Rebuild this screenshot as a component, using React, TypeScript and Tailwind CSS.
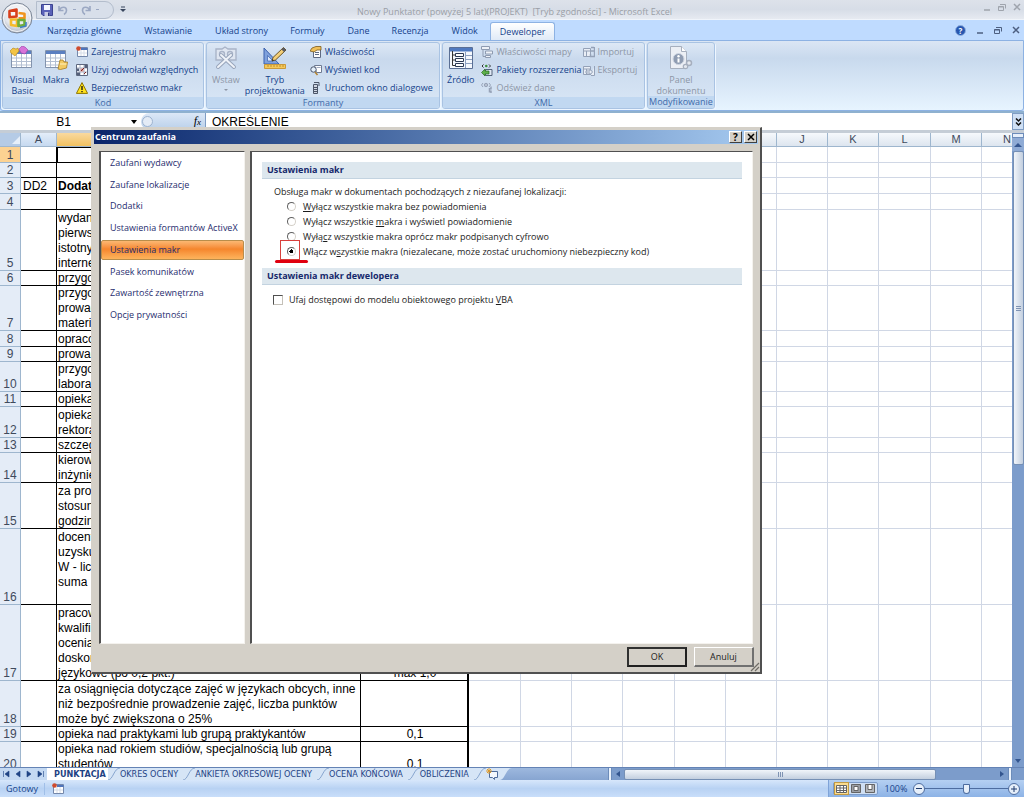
import { useState, type ReactNode } from "react";
import clsx from "clsx";

/* ---------- data ---------- */

const tabs = [
  "Narzędzia główne",
  "Wstawianie",
  "Układ strony",
  "Formuły",
  "Dane",
  "Recenzja",
  "Widok",
  "Deweloper",
];

const columns = [
  { name: "A", width: 36 },
  { name: "B", width: 304 },
  { name: "C", width: 108 },
  { name: "D", width: 52 },
  { name: "E", width: 51 },
  { name: "F", width: 51 },
  { name: "G", width: 52 },
  { name: "H", width: 51 },
  { name: "I", width: 51 },
  { name: "J", width: 51 },
  { name: "K", width: 51 },
  { name: "L", width: 52 },
  { name: "M", width: 51 },
  { name: "N", width: 51 },
];

interface Row {
  height: number;
  a?: string;
  b?: string[];
  c?: string;
}

const rows: Row[] = [
  { height: 16 },
  { height: 15 },
  { height: 16, a: "DD2", b: ["Dodatki"] },
  { height: 16 },
  { height: 61, b: ["wydanie", "pierwsze", "istotny", "internet"] },
  { height: 15, b: ["przygot"] },
  { height: 45, b: ["przygot", "prowadz", "materiał"] },
  { height: 16, b: ["opracow"] },
  { height: 15, b: ["prowadz"] },
  { height: 30, b: ["przygot", "laborat"] },
  { height: 15, b: ["opieka"] },
  { height: 31, b: ["opieka", "rektora"] },
  { height: 15, b: ["szczeg"] },
  { height: 30, b: ["kierow", "inżynie"] },
  { height: 46, b: ["za proc", "stosun", "godzin"] },
  { height: 76, b: ["docent", "uzysku", "W - licz", "suma", " "] },
  {
    height: 76,
    b: ["pracow", "kwalifik", "ocenia", "doskon", "językowe (po 0,2 pkt.)"],
    c: "max 1,0",
  },
  {
    height: 46,
    b: [
      "za osiągnięcia dotyczące zajęć w językach obcych, inne",
      "niż bezpośrednie prowadzenie zajęć, liczba punktów",
      "może być zwiększona o 25%",
    ],
  },
  { height: 15, b: ["opieka nad praktykami lub grupą praktykantów"], c: "0,1" },
  {
    height: 30,
    b: ["opieka nad rokiem studiów, specjalnością lub grupą", "studentów"],
    c: "0,1",
  },
];

const sheets = [
  "PUNKTACJA",
  "OKRES OCENY",
  "ANKIETA OKRESOWEJ OCENY",
  "OCENA KOŃCOWA",
  "OBLICZENIA",
];

const categories = [
  "Zaufani wydawcy",
  "Zaufane lokalizacje",
  "Dodatki",
  "Ustawienia formantów ActiveX",
  "Ustawienia makr",
  "Pasek komunikatów",
  "Zawartość zewnętrzna",
  "Opcje prywatności",
];

// [before, access key, after]
const macroOptions = [
  ["", "W", "yłącz wszystkie makra bez powiadomienia"],
  ["Wyłącz wszystkie ", "m", "akra i wyświetl powiadomienie"],
  ["Wyłą", "c", "z wszystkie makra oprócz makr podpisanych cyfrowo"],
  [
    "Włącz w",
    "s",
    "zystkie makra (niezalecane, może zostać uruchomiony niebezpieczny kod)",
  ],
];

/* ---------- icons ---------- */

function OfficeLogo() {
  return (
    <svg className="size-8" viewBox="0 0 32 32">
      <defs>
        <radialGradient id="orb" cx="0.5" cy="0.35" r="0.65">
          <stop offset="0" stopColor="#ffffff" />
          <stop offset="0.65" stopColor="#e3e6ec" />
          <stop offset="1" stopColor="#a9b1c0" />
        </radialGradient>
      </defs>
      <circle cx="16" cy="16" r="15" fill="url(#orb)" stroke="#7c8797" />
      <circle cx="16" cy="16" r="13.5" fill="none" stroke="#fff" strokeOpacity="0.8" />
      <g fill="none" strokeWidth="2.6" strokeLinejoin="round">
        <path d="M8.500 9l7-1.500v7l-7 .8z" stroke="#d8401c" />
        <path d="M17.500 11l6 .8v4.500h-6" stroke="#f0941d" />
        <path d="M10 17.500v5.500l6 1v-6.500z" stroke="#f6bb2a" />
        <path d="M17.500 18h6v5l-6 1z" stroke="#6fae3a" />
        <path d="M19 25.500l6-1.500v-4" stroke="#3e7fc1" strokeWidth="1.500" />
      </g>
    </svg>
  );
}

function SaveIcon() {
  return (
    <svg className="size-3" viewBox="0 0 12 12">
      <path d="M.5.5h11v11H2L.5 10z" fill="#5a62b8" stroke="#3b4390" />
      <path d="M3 1h6v5H3z" fill="#f4f6ff" />
      <path d="M3.500 8h5v4h-5z" fill="#c9cde6" />
      <path d="M7 8.500h1.500V12H7z" fill="#2f3780" />
    </svg>
  );
}

function UndoIcon({ flip = false }: { flip?: boolean }) {
  return (
    <svg className={clsx("h-3 w-2.5", flip && "-scale-x-100")} viewBox="0 0 10 12">
      <path d="M1 2v4.500h4.500M1.500 6C3 2.500 8.500 2 8.500 6.500c0 2-1 3-2.500 4" fill="none" stroke="#9ba8c3" strokeWidth="1.600" />
    </svg>
  );
}

function GridSheet({ children, ink = "#5b7fc0" }: { children?: ReactNode; ink?: string }) {
  return (
    <svg className="size-6" viewBox="0 0 24 24">
      <path d="M1.500 4.500h20v17h-20z" fill="#fff" stroke="#8393ad" />
      <path d="M2 5h19v3H2z" fill={ink} />
      <path d="M2 12h19M2 15.500h19M2 19h19M6.500 8v13M11.500 8v13M16.500 8v13" stroke="#b3bfd2" />
      {children}
    </svg>
  );
}

function VisualBasicIcon() {
  return (
    <GridSheet>
      <path d="M0 5l3-3 3 1 2-1 1 3-4 5-4-3z" fill="#f3c445" stroke="#b58518" strokeWidth="0.600" />
      <path d="M9 3l3-3 3 1 3 3-3 4-4-1z" fill="#d873d9" stroke="#9b3aa3" strokeWidth="0.600" />
    </GridSheet>
  );
}

function MacrosIcon() {
  return (
    <GridSheet>
      <path d="M14 23l2-9h3l1 2h3.500l-1 6-6 1.500z" fill="#f2ca62" stroke="#a87c1e" strokeWidth="0.800" />
      <path d="M16 18h6.500" stroke="#fff2c0" />
    </GridSheet>
  );
}

function ToolsIcon() {
  return (
    <svg className="size-6" viewBox="0 0 24 24" fill="none" stroke="#a9b4c8">
      <path d="M2 3h6l3-2 3 2h8v11H2z" fill="#dfe6f1" strokeWidth="1.400" />
      <circle cx="8" cy="8" r="2.500" strokeWidth="1.400" />
      <circle cx="16" cy="8" r="2.500" strokeWidth="1.400" />
      <path d="M4 21L17 9M20 21L7 9" stroke="#98a5bb" strokeWidth="4" strokeLinecap="round" />
      <path d="M4 21L17 9M20 21L7 9" stroke="#eef2f8" strokeWidth="2" strokeLinecap="round" />
    </svg>
  );
}

function DesignIcon() {
  return (
    <svg className="size-6" viewBox="0 0 24 24">
      <path d="M1 2v16h15z" fill="#7fa1dc" stroke="#3a60ad" />
      <path d="M4.500 9.500V15H10z" fill="#dce8fa" stroke="#3a60ad" strokeWidth="0.700" />
      <path d="M1.500 18.500h21v4h-21z" fill="#f5c95a" stroke="#c9993a" />
      <path d="M5 19v2M8 19v2M11 19v2M14 19v2M17 19v2M20 19v2" stroke="#b28222" strokeWidth="0.800" />
      <path d="M9 15l1-3.500L20.500 1.500 23 4 12.500 14z" fill="#f4cf78" stroke="#6d5523" />
      <path d="M20.500 1.500L23 4l-2 2-2.500-2.500z" fill="#5a5a60" />
      <path d="M9 15l.5-2 1.500 1.500z" fill="#333" />
    </svg>
  );
}

function SourceIcon() {
  return (
    <svg className="size-6" viewBox="0 0 24 24">
      <path d="M.5 1.500h23v21H.5z" fill="#f5f8fd" stroke="#5a6f95" />
      <path d="M1 2h22v3.500H1z" fill="#4f79c0" />
      <path d="M16.500 6v16M17 9.500h6M17 13.500h6M17 17.500h6" stroke="#8da0c0" />
      <path d="M3.500 5v14.500h3M3.500 9h3M3.500 14h3" fill="none" stroke="#333" />
      <path d="M6.500 7.500h8v3h-8zM6.500 12.500h8v3h-8zM6.500 17.500h8v3h-8z" fill="#fff" stroke="#2c3a55" />
    </svg>
  );
}

function DocPanelIcon() {
  return (
    <svg className="size-6" viewBox="0 0 24 24">
      <path d="M1.500.5h11l5 5v17h-16z" fill="#eceff5" stroke="#a6afbe" />
      <path d="M12.500.5v5h5" fill="#fff" stroke="#a6afbe" />
      <circle cx="9.500" cy="13" r="5.500" fill="#8f9cb2" stroke="#cfd6e2" />
      <path d="M9.500 12.500V16.500" stroke="#fff" strokeWidth="2" />
      <circle cx="9.500" cy="10.300" r="1.200" fill="#fff" />
      <circle cx="20" cy="17" r="2.500" fill="#e4e8ef" stroke="#a6afbe" strokeWidth="1.500" />
      <circle cx="16.500" cy="20.500" r="2.200" fill="#e4e8ef" stroke="#a6afbe" strokeWidth="1.200" />
    </svg>
  );
}

function RecordIcon() {
  return (
    <svg className="size-3" viewBox="0 0 12 12">
      <path d="M1.500 1.500h10v9h-10z" fill="#fff" stroke="#7588ab" />
      <path d="M5 2h6.500v2H5z" fill="#4f74bb" />
      <path d="M2 7h9M5 4v6M8 4v6" stroke="#d5dce8" />
      <circle cx="2.500" cy="2.500" r="2.300" fill="#cf4b2e" />
    </svg>
  );
}

function RelativeIcon() {
  return (
    <svg className="size-3" viewBox="0 0 12 12">
      <path d="M.5.5h11v11H.5z" fill="#fff" stroke="#5d6880" />
      <path d="M1 4h10M1 8h10M4 1v10M8 1v10" stroke="#a9b2c6" />
      <path d="M1 8.500h3V11H1zM8.500 1H11v3H8.500zM1 4.500h2V7H1z" fill="#55607a" />
      <path d="M4.500 4.500h3v3h-3z" fill="#d9938e" />
      <path d="M5 7l3-3M8 10l2-2" stroke="#7a2222" />
    </svg>
  );
}

function WarningIcon() {
  return (
    <svg className="size-3" viewBox="0 0 12 12">
      <path d="M6 .6L11.600 11.400H.4z" fill="#ffe11c" stroke="#8f7600" strokeLinejoin="round" />
      <path d="M6 4v4M6 9v1.300" stroke="#1c1c1c" strokeWidth="1.400" />
    </svg>
  );
}

function PropertiesIcon() {
  return (
    <svg className="size-3" viewBox="0 0 12 12">
      <path d="M3.500 3.500h7v8h-7z" fill="#fff" stroke="#5e6a82" />
      <path d="M5 6.500h4M5 8.500h4" stroke="#5e6a82" />
      <path d="M0 5l2-3 4-1.500h5V4H7L4 6z" fill="#f0c05a" stroke="#7b5a1c" strokeWidth="0.800" />
    </svg>
  );
}

function ViewCodeIcon() {
  return (
    <svg className="size-3" viewBox="0 0 12 12">
      <path d="M4.500 1.500h7v7h-5z" fill="#fff" stroke="#6e7a93" />
      <path d="M6.500 3.500h4" stroke="#a1abc0" />
      <circle cx="3.500" cy="5.500" r="2.700" fill="#e4f0fb" stroke="#4b566d" />
      <path d="M5 8l2.500 3" stroke="#b38432" strokeWidth="1.600" />
    </svg>
  );
}

function DialogIcon() {
  return (
    <svg className="size-3" viewBox="0 0 12 12">
      <path d="M3.500 2.500h4v9h-4z" fill="#cfd6e2" stroke="#4b5568" />
      <path d="M4 5.500h3M4 7.500h3M4 9.500h3" stroke="#4b5568" />
      <path d="M4 .5h5v3.500" fill="none" stroke="#4b5568" />
    </svg>
  );
}

function MapIcon() {
  return (
    <svg className="size-3" viewBox="0 0 12 12" fill="#eef2f8" stroke="#8e9bb1">
      <path d="M.5.5h8v3h-8zM4.500 5h7v3h-7zM4.500 9.500h5v2h-5z" />
      <path d="M2 4v6.500h2.500" fill="none" />
    </svg>
  );
}

function PackIcon() {
  return (
    <svg className="size-3" viewBox="0 0 12 12">
      <path d="M2.500.5L1 2l1.500 1.500M8 .5L9.500 2 8 3.500" fill="none" stroke="#333" />
      <circle cx="5.300" cy="2" r="1.300" fill="#3c8d3c" />
      <path d="M4.500 5.500h6.500v6H4.500z" fill="#dfe8f4" stroke="#56647d" />
      <path d="M.5 8.500L4 5v2h4v3H4v2z" fill="#5eb04c" stroke="#2a6c22" strokeWidth="0.700" />
    </svg>
  );
}

function RefreshIcon() {
  return (
    <svg className="size-3" viewBox="0 0 12 12" fill="none" stroke="#97a3b8">
      <path d="M2 1L.5 3 2 5M8 1l1.500 2L8 5" />
      <circle cx="5" cy="3" r="1.700" fill="#b6c0d0" />
      <path d="M10 4.500v3M10 8.500V11M8.500 6v4.500" strokeWidth="1.500" />
    </svg>
  );
}

function TransferIcon({ up = false }: { up?: boolean }) {
  return (
    <svg className="size-3" viewBox="0 0 12 12" fill="#e9eef6" stroke="#94a1b7">
      <path d="M.5 2.500h7v8h-7z" />
      <path d="M1 5h6M3.500 5v5" />
      {up ? (
        <path d="M3 7h4V5l2.500 3L7 11V9H3zM11.500 2v9.500H8" />
      ) : (
        <path d="M11.500 1v9.500h-4V8M8 1.500h3M8 5h3" fill="none" strokeWidth="1.400" />
      )}
    </svg>
  );
}

function MinimizeGlyph() {
  return (
    <svg className="h-2 w-2" viewBox="0 0 8 8">
      <path d="M1 7h6" stroke="currentColor" strokeWidth="1.500" />
    </svg>
  );
}

function RestoreGlyph() {
  return (
    <svg className="h-2 w-2" viewBox="0 0 8 8" fill="none" stroke="currentColor">
      <path d="M.5 3.500h5v4h-5zM.5 4h5M2 1.500h5.500V5.500" />
    </svg>
  );
}

function CloseGlyph() {
  return (
    <svg className="h-2 w-2" viewBox="0 0 8 8">
      <path d="M1 1l6 6M7 1L1 7" stroke="currentColor" strokeWidth="1.500" />
    </svg>
  );
}

/* ---------- ribbon ---------- */

function SmallButton({ icon, label, disabled = false }: { icon: ReactNode; label: string; disabled?: boolean }) {
  return (
    <button
      disabled={disabled}
      className={clsx("flex h-[18px] items-center gap-[3px] whitespace-nowrap", disabled ? "text-[#8d96a6]" : "text-[#15428b]")}
    >
      {icon}
      {label}
    </button>
  );
}

function LargeButton({ icon, lines, disabled = false, menu = false }: { icon: ReactNode; lines: string[]; disabled?: boolean; menu?: boolean }) {
  return (
    <button
      disabled={disabled}
      className={clsx("flex flex-col items-center pt-[3px] leading-[11px]", disabled ? "text-[#8d96a6]" : "text-[#15428b]")}
    >
      <span className="mb-[4px]">{icon}</span>
      {lines.map((line) => (
        <span key={line}>{line}</span>
      ))}
      {menu && <span className="mt-[4px] border-x-2 border-t-2 border-x-transparent border-t-[#8d96a6]" />}
    </button>
  );
}

function Group({ title, width, children }: { title: string; width: string; children: ReactNode }) {
  return (
    <section
      className={clsx(
        "flex shrink-0 flex-col overflow-hidden rounded-[3px] border border-[#a9c3e3] bg-linear-to-b from-[#dde8f5] via-[#c9d9ed] via-25% to-[#d9e7f6] shadow-[1px_1px_0_#eef6ff]",
        width,
      )}
    >
      <div className="flex flex-1">{children}</div>
      <h2 className="h-[12px] bg-[#c1d8f1] text-center leading-[12px] whitespace-nowrap text-[#3e6aaa]">{title}</h2>
    </section>
  );
}

function Ribbon() {
  return (
    <div className="flex h-[71px] gap-[2px] rounded-b-[3px] border border-[#8db2e3] bg-linear-to-b from-[#dbe6f4] via-[#c8d9ed] via-25% to-[#e7f4ff] p-px">
      <Group title="Kod" width="w-[202px]">
        <div className="flex gap-[8px] pl-[7px]">
          <LargeButton icon={<VisualBasicIcon />} lines={["Visual", "Basic"]} />
          <LargeButton icon={<MacrosIcon />} lines={["Makra"]} />
        </div>
        <div className="flex flex-col pl-[7px]">
          <SmallButton icon={<RecordIcon />} label="Zarejestruj makro" />
          <SmallButton icon={<RelativeIcon />} label="Użyj odwołań względnych" />
          <SmallButton icon={<WarningIcon />} label="Bezpieczeństwo makr" />
        </div>
      </Group>
      <Group title="Formanty" width="w-[234px]">
        <div className="flex gap-[5px] pl-[5px]">
          <LargeButton icon={<ToolsIcon />} lines={["Wstaw"]} disabled menu />
          <LargeButton icon={<DesignIcon />} lines={["Tryb", "projektowania"]} />
        </div>
        <div className="flex flex-col pl-[5px]">
          <SmallButton icon={<PropertiesIcon />} label="Właściwości" />
          <SmallButton icon={<ViewCodeIcon />} label="Wyświetl kod" />
          <SmallButton icon={<DialogIcon />} label="Uruchom okno dialogowe" />
        </div>
      </Group>
      <Group title="XML" width="w-[203px]">
        <div className="flex pl-[4px]">
          <LargeButton icon={<SourceIcon />} lines={["Źródło"]} />
        </div>
        <div className="flex flex-col pl-[7px]">
          <SmallButton icon={<MapIcon />} label="Właściwości mapy" disabled />
          <SmallButton icon={<PackIcon />} label="Pakiety rozszerzenia" />
          <SmallButton icon={<RefreshIcon />} label="Odśwież dane" disabled />
        </div>
        <div className="flex flex-col pl-px">
          <SmallButton icon={<TransferIcon />} label="Importuj" disabled />
          <SmallButton icon={<TransferIcon up />} label="Eksportuj" disabled />
        </div>
      </Group>
      <Group title="Modyfikowanie" width="w-[68px]">
        <div className="flex flex-1 justify-center">
          <LargeButton icon={<DocPanelIcon />} lines={["Panel", "dokumentu"]} disabled />
        </div>
      </Group>
    </div>
  );
}

function Header() {
  return (
    <header className="relative bg-[#bfdbff]">
      <div className="flex h-[20px] items-center border-b border-[#f0f4fa] bg-linear-to-b from-[#dde2ea] via-[#d7dde7] to-[#e6eaf1] pl-[36px]">
        <div className="flex h-[18px] w-[78px] items-center gap-[5px] rounded-r-full border border-[#b3bdcc] bg-[#d8dfea] pl-[4px]">
          <button aria-label="Zapisz"><SaveIcon /></button>
          <button aria-label="Cofnij"><UndoIcon /></button>
          <span className="h-px w-[3px] bg-[#9ba8c3]" />
          <button aria-label="Ponów"><UndoIcon flip /></button>
          <span className="h-px w-[3px] bg-[#9ba8c3]" />
        </div>
        <button aria-label="Dostosuj" className="ml-[6px]">
          <svg className="h-[7px] w-[6px]" viewBox="0 0 6 7">
            <path d="M1 1h4" stroke="#39465e" />
            <path d="M0 3h6L3 6z" fill="#39465e" />
          </svg>
        </button>
        <h1 className="flex-1 pt-[4px] pr-[2px] text-center whitespace-pre text-[#9a9ea6]">
          {"Nowy Punktator (powyżej 5 lat)(PROJEKT)  [Tryb zgodności] - Microsoft Excel"}
        </h1>
        <div className="flex w-[119px] justify-end gap-[7px] pr-[3px] pb-[6px] text-[#9fa4ad]">
          <button aria-label="Minimalizuj"><MinimizeGlyph /></button>
          <button aria-label="Przywróć"><RestoreGlyph /></button>
          <button aria-label="Zamknij"><CloseGlyph /></button>
        </div>
      </div>
      <nav className="flex h-[20px] items-end pl-[36px]">
        {tabs.map((tab) => (
          <button
            key={tab}
            className={clsx(
              "h-[18px] leading-[18px] whitespace-nowrap text-[#15428b]",
              tab === "Deweloper"
                ? "ml-px rounded-t-[3px] border border-b-0 border-[#8db2e3] bg-linear-to-b from-white to-[#dfeaf7] px-[9px]"
                : "px-[11px]",
              (tab === "Narzędzia główne" || tab === "Wstawianie" || tab === "Formuły" || tab === "Recenzja") && "mr-px",
            )}
          >
            {tab}
          </button>
        ))}
        <div className="flex flex-1 items-center justify-end gap-[10px] self-center pr-[4px] text-[#4d5f80]">
          <button aria-label="Pomoc" className="size-[11px] rounded-full border border-[#8fb0e0] bg-[#2857b0] text-center text-[8px] leading-[9px] font-bold text-white">
            ?
          </button>
          <button aria-label="Minimalizuj okno"><MinimizeGlyph /></button>
          <button aria-label="Przywróć okno"><RestoreGlyph /></button>
          <button aria-label="Zamknij okno"><CloseGlyph /></button>
        </div>
      </nav>
      <Ribbon />
      <button aria-label="Przycisk pakietu Office" className="absolute top-[2px] left-px">
        <OfficeLogo />
      </button>
    </header>
  );
}

function FormulaBar() {
  return (
    <div className="flex h-[22px] items-stretch border-t-2 border-b-3 border-t-[#8fb1cf] border-b-[#c5cdd6] bg-white font-['Liberation_Sans',sans-serif] text-[12px]">
      <div className="flex w-[141px] items-center justify-end gap-[60px] pr-[4px]">
        <span>B1</span>
        <button aria-label="Pole nazwy" className="border-x-3 border-t-4 border-x-transparent border-t-black" />
      </div>
      <div className="flex w-[65px] items-center justify-between rounded-l-full border-r border-[#7f9dc4] bg-linear-to-b from-[#dce8f7] to-[#b9cfea] pr-[4px] pl-px">
        <span className="size-[11px] rounded-full border border-[#9db3d0] bg-[#e3ebf6]" />
        <button aria-label="Wstaw funkcję" className="font-['Liberation_Serif',serif] italic">
          f<span className="text-[9px]">x</span>
        </button>
      </div>
      <input aria-label="Pasek formuły" defaultValue="OKREŚLENIE" className="min-w-0 flex-1 pl-[6px] outline-none" />
      <button aria-label="Rozwiń pasek formuły" className="flex w-[12px] items-center justify-center border border-[#7f9dc4] bg-[#cfe0f5]">
        <svg className="h-[8px] w-[7px]" viewBox="0 0 7 8" fill="none" stroke="#111" strokeWidth="1.500">
          <path d="M1 .5l2.500 2.500L6 .5M1 4.500L3.500 7 6 4.500" />
        </svg>
      </button>
    </div>
  );
}

/* ---------- sheet ---------- */

function Sheet() {
  return (
    <div className="min-w-0 flex-1 overflow-hidden">
      <table className="w-[1033px] table-fixed border-separate border-spacing-0 font-['Liberation_Sans',sans-serif] text-[12px] leading-[15px] text-black">
        <colgroup>
          <col className="w-[21px]" />
          {columns.map((column) => (
            <col key={column.name} style={{ width: column.width }} />
          ))}
        </colgroup>
        <thead>
          <tr className="h-[14px] text-[#3f4a5c]">
            <th className="border-r border-b border-[#9eb6ce] bg-[#b5cbe6] p-0">
              <span className="ml-auto block size-0 border-b-8 border-l-8 border-b-[#e6effa] border-l-transparent" />
            </th>
            {columns.map((column) => (
              <th
                key={column.name}
                className={clsx(
                  "border-r border-b border-[#9eb6ce] bg-linear-to-b p-0 text-[11px] leading-[13px] font-normal",
                  column.name === "A" && "from-[#e3edf9] to-[#c6d9f0]",
                  column.name === "B" && "from-[#f9d99f] to-[#f1c15f]",
                  column.name !== "A" && column.name !== "B" && "from-[#f6f9fc] to-[#dde5ef]",
                )}
              >
                {column.name}
              </th>
            ))}
          </tr>
        </thead>
        <tbody>
          {rows.map((row, index) => (
            <tr key={index} style={{ height: row.height }}>
              <th
                className={clsx(
                  "border-r border-b border-[#9eb6ce] p-0 text-center align-bottom font-normal text-[#3f4a5c]",
                  index === 0 ? "bg-[#fcd292]" : "bg-[#e4ecf7]",
                )}
              >
                <div className="h-[14px]">{index + 1}</div>
              </th>
              <td className="border-r border-b border-black p-0 pl-[2px] align-bottom">
                <div className="h-[14px]">{row.a}</div>
              </td>
              <td
                className={clsx(
                  "border-r border-b border-black p-0 pl-px align-bottom whitespace-nowrap",
                  index === 0 && "outline-1 -outline-offset-1 outline-black",
                  index === 2 && "font-bold",
                )}
              >
                {row.b?.map((line, i) => (
                  <div key={i} className={i === row.b!.length - 1 ? "h-[14px]" : "h-[15px]"}>
                    {line}
                  </div>
                ))}
              </td>
              <td className="border-r-2 border-b border-black p-0 pl-[2px] text-center align-bottom">
                <div className="h-[14px]">{row.c}</div>
              </td>
              {columns.slice(3).map((column) => (
                <td key={column.name} className="border-r border-b border-[#d0d7e5] p-0" />
              ))}
            </tr>
          ))}
        </tbody>
      </table>
    </div>
  );
}

function VerticalScrollbar() {
  return (
    <div className="flex w-[12px] shrink-0 flex-col items-center bg-[#7c9ccb]">
      <div className="h-[5px] w-full border border-[#6c8cba] bg-[#e6effa]" />
      <button aria-label="Przewiń w górę" className="flex h-[13px] w-full items-center justify-center bg-[#8fabd5]">
        <span className="border-x-4 border-b-4 border-x-transparent border-b-[#33558f]" />
      </button>
      <div className="flex h-[314px] w-[11px] flex-col items-center justify-center gap-px rounded-[2px] border border-[#7690b5] bg-linear-to-r from-[#f1f5fa] to-[#c3cfdf]">
        <span className="h-px w-[5px] bg-[#7f93b3]" />
        <span className="h-px w-[5px] bg-[#7f93b3]" />
        <span className="h-px w-[5px] bg-[#7f93b3]" />
      </div>
      <button aria-label="Przewiń w dół" className="mt-auto mb-[4px] border-x-3 border-t-4 border-x-transparent border-t-[#33558f]" />
    </div>
  );
}

const navArrows = [
  { label: "Pierwszy arkusz", path: "M1.500 1v6M7 1v6L3 4z" },
  { label: "Poprzedni arkusz", path: "M6 1v6L2 4z" },
  { label: "Następny arkusz", path: "M2 1v6l4-3z" },
  { label: "Ostatni arkusz", path: "M1 1v6l4-3zM6.500 1v6" },
];

function TabEdge() {
  return (
    <svg className="h-[12px] w-[12px] shrink-0" viewBox="0 0 12 12">
      <path d="M0 12C5 12 6 0 12 0v12z" fill="#d6e5f6" />
      <path d="M0 12C5 12 6 0 12 0" fill="none" stroke="#88a6cf" />
    </svg>
  );
}

function SheetBar() {
  return (
    <div className="flex h-[13px] shrink-0 border-t border-[#6483b5] bg-linear-to-b from-[#9db8de] to-[#87a5d1] font-['DejaVu_Sans_Condensed','DejaVu_Sans',sans-serif] text-[9px] leading-[12px]">
      <div className="flex w-[47px] items-center justify-around bg-[#c4d9f2]">
        {navArrows.map((arrow) => (
          <button key={arrow.label} aria-label={arrow.label}>
            <svg className="size-2" viewBox="0 0 8 8" fill="#1f4384" stroke="#1f4384" strokeWidth="0.600">
              <path d={arrow.path} />
            </svg>
          </button>
        ))}
      </div>
      {sheets.map((sheet, index) => (
        <div key={sheet} className={clsx("flex", index === 0 ? "bg-white" : "bg-[#d6e5f6]")}>
          {index > 0 && <TabEdge />}
          <button className={clsx("whitespace-nowrap text-[#1f4384]", index === 0 ? "pr-[2px] pl-[7px] font-bold" : "pr-[5px]")}>
            {sheet}
          </button>
        </div>
      ))}
      <div className="flex bg-[#d6e5f6]">
        <TabEdge />
        <button aria-label="Wstaw arkusz" className="pr-[2px]">
          <svg className="size-3" viewBox="0 0 12 12">
            <path d="M3.500 3.500h8v6h-3v2l-2-2h-3z" fill="#f4f8fd" stroke="#4f6c9b" />
            <path d="M3 0v6M0 3h6M1 1l4 4M5 1L1 5" stroke="#dd9a2b" />
          </svg>
        </button>
      </div>
      <svg className="h-[12px] w-[12px]" viewBox="0 0 12 12">
        <path d="M12 0C6 0 5 12 0 12V0z" fill="#d6e5f6" />
      </svg>
      <div className="ml-auto flex w-[416px] items-center bg-[#7c9ccb]">
        <span className="h-full w-[4px] border-x border-[#6c8cba] bg-[#eaf2fc]" />
        <button aria-label="Przewiń w lewo" className="mx-[4px] border-y-3 border-r-4 border-y-transparent border-r-[#33558f]" />
        <div className="flex h-[11px] w-[312px] items-center justify-center gap-px rounded-[2px] border border-[#7690b5] bg-linear-to-b from-[#f1f5fa] to-[#c3cfdf]">
          <span className="h-[5px] w-px bg-[#7f93b3]" />
          <span className="h-[5px] w-px bg-[#7f93b3]" />
          <span className="h-[5px] w-px bg-[#7f93b3]" />
        </div>
        <button aria-label="Przewiń w prawo" className="mr-[4px] ml-auto border-y-3 border-l-4 border-y-transparent border-l-[#33558f]" />
        <span className="mr-[12px] h-full w-[4px] border-x border-[#6c8cba] bg-[#eaf2fc]" />
      </div>
    </div>
  );
}

function StatusBar() {
  const [zoom, setZoom] = useState(50);

  return (
    <footer className="flex h-[17px] shrink-0 items-center bg-linear-to-b from-[#d7e7fb] via-[#b8d2f3] to-[#c9defa] text-[#15428b]">
      <span className="w-[45px] border-r border-[#a0bfe8] pl-[6px]">Gotowy</span>
      <button aria-label="Zarejestruj makro" className="ml-[7px]"><RecordIcon /></button>
      <div className="ml-auto flex h-full w-[196px] items-center border-l border-[#7fa3d8] bg-linear-to-b from-[#b5d0f2] to-[#8db3e6] pl-[4px]">
        <div className="flex h-[13px] items-center rounded-[2px] border border-[#7d9cc9] bg-[#cfdff3]">
          <button aria-label="Normalny" className="flex h-[13px] w-[15px] items-center justify-center border border-[#c29b45] bg-[#fbdc8f]">
            <svg className="h-[8px] w-[11px]" viewBox="0 0 11 8" fill="#fff" stroke="#656565">
              <path d="M.5.5h10v7H.5zM.5 3h10M.5 5.500h10M4 .5v7M7.500.5v7" />
            </svg>
          </button>
          <button aria-label="Układ strony" className="flex w-[14px] justify-center">
            <svg className="h-[9px] w-[10px]" viewBox="0 0 10 9" fill="#9a9ea5" stroke="#656565">
              <path d="M.5.5h9v8h-9z" />
              <path d="M3 2.500h4v4H3z" fill="#fff" />
            </svg>
          </button>
          <button aria-label="Podział stron" className="flex w-[14px] justify-center">
            <svg className="h-[9px] w-[10px]" viewBox="0 0 10 9" fill="#b4b8be" stroke="#656565">
              <path d="M.5.5h9v8h-9z" />
              <path d="M3 .5h4v5H3z" fill="#fff" />
            </svg>
          </button>
        </div>
        <button className="ml-[6px] w-[24px]">{zoom * 2}%</button>
        <button aria-label="Pomniejsz" onClick={() => setZoom(Math.max(5, zoom - 5))} className="ml-[5px] flex size-[12px] shrink-0 items-center justify-center rounded-full border border-[#4d6c9f] bg-[#e6effa]">
          <span className="h-px w-[6px] bg-[#1f3b6e]" />
        </button>
        <input
          type="range"
          aria-label="Powiększenie"
          value={zoom}
          onChange={(e) => setZoom(Number(e.target.value))}
          className="h-[11px] min-w-0 flex-1 appearance-none bg-[linear-gradient(#4d6c9f,#4d6c9f)] bg-[length:100%_1px] bg-center bg-no-repeat [&::-webkit-slider-thumb]:h-[10px] [&::-webkit-slider-thumb]:w-[7px] [&::-webkit-slider-thumb]:appearance-none [&::-webkit-slider-thumb]:rounded-t-[1px] [&::-webkit-slider-thumb]:rounded-b-[4px] [&::-webkit-slider-thumb]:border [&::-webkit-slider-thumb]:border-[#4d6c9f] [&::-webkit-slider-thumb]:bg-[#e6effa]"
        />
        <button aria-label="Powiększ" onClick={() => setZoom(Math.min(100, zoom + 5))} className="mr-[4px] flex size-[12px] shrink-0 items-center justify-center rounded-full border border-[#4d6c9f] bg-[#e6effa]">
          <svg className="size-[6px]" viewBox="0 0 6 6">
            <path d="M0 3h6M3 0v6" stroke="#1f3b6e" />
          </svg>
        </button>
      </div>
    </footer>
  );
}

/* ---------- dialog ---------- */

function SectionTitle({ children }: { children: ReactNode }) {
  return (
    <h3 className="h-[17px] border-b border-[#c3d3e0] bg-[#dde7ee] pl-[5px] leading-[16px] font-bold text-[#15286b]">
      {children}
    </h3>
  );
}

function TrustCenter() {
  const [category, setCategory] = useState("Ustawienia makr");
  const [option, setOption] = useState(3);

  return (
    <div
      role="dialog"
      aria-label="Centrum zaufania"
      className="absolute top-[127px] left-[91px] flex h-[547px] w-[671px] flex-col border-t border-r-2 border-b-2 border-l border-t-[#d4d0c8] border-r-[#505050] border-b-[#505050] border-l-[#d4d0c8] bg-[#d4d0c8] p-[2px] text-[#1c1c1c]"
    >
      <div className="flex h-[14px] shrink-0 items-center bg-linear-to-r from-[#0a246a] to-[#a6caf0] pr-px">
        <h2 className="flex-1 pl-px font-bold text-white">Centrum zaufania</h2>
        <button aria-label="Pomoc" className="flex h-[12px] w-[13px] items-center justify-center border border-t-white border-r-[#404040] border-b-[#404040] border-l-white bg-[#d4d0c8] text-[10px] leading-none font-bold text-black">
          ?
        </button>
        <button aria-label="Zamknij" className="ml-[2px] flex h-[12px] w-[13px] items-center justify-center border border-t-white border-r-[#404040] border-b-[#404040] border-l-white bg-[#d4d0c8] text-black">
          <CloseGlyph />
        </button>
      </div>
      <div className="mt-[7px] flex min-h-0 flex-1 gap-[5px] px-[5px]">
        <nav className="w-[146px] border-t border-r border-b border-l-2 border-t-[#505050] border-r-[#f4f2ee] border-b-[#f4f2ee] border-l-[#505050] bg-white pt-px">
          <div className="flex h-[172px] flex-col justify-between">
            {categories.map((name) => (
              <button
                key={name}
                onClick={() => setCategory(name)}
                className={clsx(
                  "h-[20px] border pl-[8px] text-left leading-[18px] whitespace-nowrap text-[#1f2d6e]",
                  name === category
                    ? "rounded-[2px] border-[#b98d4b] bg-linear-to-b from-[#fbb872] via-[#f5862c] via-45% to-[#fdb45c]"
                    : "border-transparent",
                )}
              >
                {name}
              </button>
            ))}
          </div>
        </nav>
        <div className="flex-1 border-t border-r border-b border-l-2 border-t-[#505050] border-r-[#f4f2ee] border-b-[#f4f2ee] border-l-[#505050] bg-white px-[10px] pt-[10px]">
          <SectionTitle>Ustawienia makr</SectionTitle>
          <fieldset aria-label="Ustawienia makr" className="pt-[6px] pb-[9px] pl-[12px]">
            <p className="leading-[14px]">Obsługa makr w dokumentach pochodzących z niezaufanej lokalizacji:</p>
            {macroOptions.map(([before, key, after], index) => (
              <label key={after} className="relative flex h-[15px] items-center gap-[7px] pl-[13px] leading-[15px] whitespace-pre">
                <input
                  type="radio"
                  name="macros"
                  checked={option === index}
                  onChange={() => setOption(index)}
                  className="size-[9px] appearance-none rounded-full border border-t-[#606060] border-r-[#d4d0c8] border-b-[#d4d0c8] border-l-[#606060] bg-white checked:bg-[radial-gradient(circle,#000_0_2px,#fff_2px)]"
                />
                <span>
                  {before}
                  <u>{key}</u>
                  {after}
                </span>
                {index === 3 && (
                  <>
                    <span className="absolute -top-[4px] left-[6px] size-[20px] border border-[#d8403c]" />
                    <span className="absolute top-[16px] left-px h-[3px] w-[33px] rounded-full bg-[#e0000f]" />
                  </>
                )}
              </label>
            ))}
          </fieldset>
          <SectionTitle>Ustawienia makr dewelopera</SectionTitle>
          <label className="mt-[7px] flex h-[15px] items-center gap-[6px] pl-[11px]">
            <input
              type="checkbox"
              className="size-[10px] appearance-none border border-t-[#505050] border-r-[#c4c0b8] border-b-[#c4c0b8] border-l-[#505050] bg-white checked:bg-black"
            />
            <span>
              Ufaj dostępowi do modelu obiektowego projektu <u>V</u>BA
            </span>
          </label>
        </div>
      </div>
      <div className="flex h-[26px] shrink-0 items-start justify-end gap-[7px] pt-[3px] pr-[4px]">
        <button className="h-[20px] w-[60px] border-2 border-t-[#303030] border-r-[#202020] border-b-[#202020] border-l-[#303030] bg-[#d4d0c8]">OK</button>
        <button className="h-[20px] w-[60px] border border-t-white border-r-2 border-r-[#707070] border-b-2 border-b-[#707070] border-l-white bg-[#d4d0c8]">Anuluj</button>
      </div>
      <svg className="absolute right-0 bottom-0 size-[10px]" viewBox="0 0 10 10">
        <path d="M1 9l8-8M5 9l4-4" stroke="#6f6c66" strokeWidth="1.200" />
      </svg>
    </div>
  );
}

export default function App() {
  return (
    <div className="relative flex h-screen w-full flex-col overflow-hidden bg-white font-['Open_Sans',sans-serif] text-[9px] leading-[12px]">
      <Header />
      <FormulaBar />
      <main className="flex min-h-0 flex-1">
        <Sheet />
        <VerticalScrollbar />
      </main>
      <SheetBar />
      <StatusBar />
      <TrustCenter />
    </div>
  );
}
